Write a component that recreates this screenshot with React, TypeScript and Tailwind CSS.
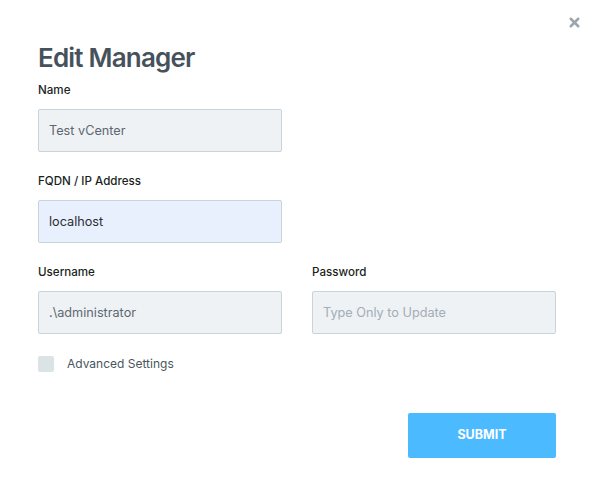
import { X } from "lucide-react";

const inputBase =
  "h-[43px] w-[244px] rounded-[2px] border border-[#c8d3da] px-[10px] text-[12.7px] outline-none";

function Field({
  label,
  value,
  placeholder,
  className,
}: {
  label: string;
  value?: string;
  placeholder?: string;
  className: string;
}) {
  return (
    <div className="flex flex-col">
      <label className="mb-[11px] text-[11.6px] font-medium leading-[16px] text-[#1b1f22]">
        {label}
      </label>
      <input
        readOnly
        value={value}
        placeholder={placeholder}
        className={`${inputBase} ${className}`}
      />
    </div>
  );
}

export default function App() {
  return (
    <div
      className="relative h-[486px] w-[594px] bg-white px-[38px] pt-[40px]"
      style={{ fontFamily: "Inter, 'Noto Sans', sans-serif" }}
    >
      <button className="absolute right-[12px] top-[15px] text-[#9aa5ad]">
        <X className="h-[15px] w-[15px]" strokeWidth={4} />
      </button>

      <h1 className="text-[26px] font-semibold leading-[36px] tracking-[-0.8px] text-[#46525b]">
        Edit Manager
      </h1>

      <div className="mt-[6px] flex flex-col gap-[21px]">
        <Field
          label="Name"
          value="Test vCenter"
          className="bg-[#eef2f5] text-[#5d6770]"
        />
        <Field
          label="FQDN / IP Address"
          value="localhost"
          className="bg-[#e8f0fe] text-[#2a2f33]"
        />
        <div className="flex gap-[30px]">
          <Field
            label="Username"
            value=".\administrator"
            className="bg-[#eef2f5] text-[#5d6770]"
          />
          <Field
            label="Password"
            placeholder="Type Only to Update"
            className="bg-[#eef2f5] text-[#5d6770] placeholder:text-[#a3adb5]"
          />
        </div>
      </div>

      <div className="mt-[21px] flex items-center gap-[13px]">
        <span className="h-[16px] w-[16px] rounded-[2px] bg-[#dbe3e7]" />
        <span className="text-[12px] text-[#4a555e]">Advanced Settings</span>
      </div>

      <div className="mt-[40px] flex justify-end">
        <button className="h-[45px] w-[148px] rounded-[2px] bg-[#4bbaff] text-[12.5px] font-bold text-white">
          SUBMIT
        </button>
      </div>
    </div>
  );
}
